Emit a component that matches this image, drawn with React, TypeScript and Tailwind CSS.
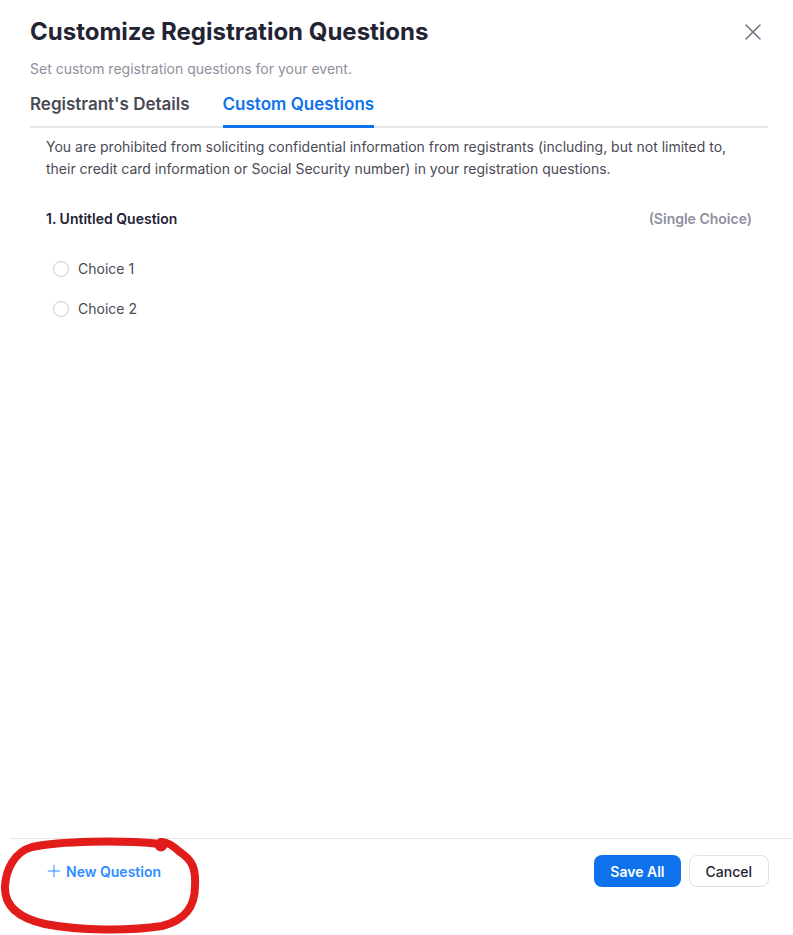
import { X, Plus } from "lucide-react";

const choices = ["Choice 1", "Choice 2"];

export default function App() {
  return (
    <div className="relative flex h-[935px] w-[793px] flex-col bg-white font-['Inter',sans-serif] text-[#232333]">
      {/* Header */}
      <div className="flex items-start justify-between pl-[30px] pr-[26px] pt-[16px]">
        <h1 className="text-[24px] font-bold leading-[32px] text-[#232333]">
          Customize Registration Questions
        </h1>
        <button className="mt-[2px] text-[#747487]">
          <X className="h-[28px] w-[28px]" strokeWidth={1.3} />
        </button>
      </div>
      <p className="pl-[30px] pt-[12px] text-[14px] leading-[18px] text-[#8f8f9d]">
        Set custom registration questions for your event.
      </p>

      {/* Tabs */}
      <div className="ml-[30px] mr-[25px] mt-[14px] flex gap-[33px] border-b-2 border-[#e4e6ea]">
        <div className="pb-[10px] text-[17px] font-semibold leading-[24px] text-[#4a4a55]">
          Registrant's Details
        </div>
        <div className="-mb-[2px] border-b-[3px] border-[#0e72ed] pb-[9px] text-[17px] font-semibold leading-[24px] text-[#0e72ed]">
          Custom Questions
        </div>
      </div>

      {/* Body */}
      <div className="flex-1 pl-[46px] pr-[41px] pt-[8px]">
        <p className="max-w-[690px] text-[14px] leading-[22px] text-[#4a4a55]">
          You are prohibited from soliciting confidential information from registrants (including, but not limited to, their credit card information or Social Security number) in your registration questions.
        </p>
        <div className="mt-[28px] flex items-center justify-between">
          <span className="text-[14px] font-semibold text-[#232333]">1. Untitled Question</span>
          <span className="text-[14px] font-semibold text-[#8f8f9d]">(Single Choice)</span>
        </div>
        <div className="mt-[30px] flex flex-col gap-[20px] pl-[7px]">
          {choices.map((c) => (
            <label key={c} className="flex items-center gap-[9px] text-[14px] leading-[20px] text-[#4a4a55]">
              <span className="h-[16px] w-[16px] rounded-full border border-[#c9c9d1] bg-white" />
              {c}
            </label>
          ))}
        </div>
      </div>

      {/* Footer */}
      <div className="mb-[48px] ml-[10px] border-t border-[#e4e6ea]">
        <div className="flex items-center justify-between pl-[34px] pr-[24px] pt-[16px]">
          <button className="flex items-center gap-[2px] text-[14px] font-semibold text-[#2d8cff]">
            <Plus className="h-[20px] w-[20px]" strokeWidth={1.2} />
            New Question
          </button>
          <div className="flex gap-[8px]">
            <button className="h-[32px] rounded-[8px] bg-[#0e72ed] px-[16px] text-[14px] font-semibold text-white">
              Save All
            </button>
            <button className="h-[32px] rounded-[8px] border border-[#dfe1e6] bg-white px-[16px] text-[14px] font-medium text-[#232333]">
              Cancel
            </button>
          </div>
        </div>
      </div>

      {/* Red hand-drawn annotation */}
      <svg
        className="pointer-events-none absolute left-0 top-[828px]"
        width="210"
        height="107"
        viewBox="0 0 210 107"
        fill="none"
      >
        <path
          d="M160 16 C 120 12, 60 13, 32 19 C 14 24, 6 42, 5 58 C 4 78, 18 90, 45 96 C 80 103, 130 103, 162 98 C 186 92, 195 78, 195 58 C 196 40, 192 32, 180 24 C 172 17, 166 13, 161 14"
          stroke="#e21b1b"
          strokeWidth="8"
          strokeLinecap="round"
          strokeLinejoin="round"
        />
        <circle cx="161" cy="17" r="6.5" fill="#e21b1b" />
      </svg>
    </div>
  );
}
